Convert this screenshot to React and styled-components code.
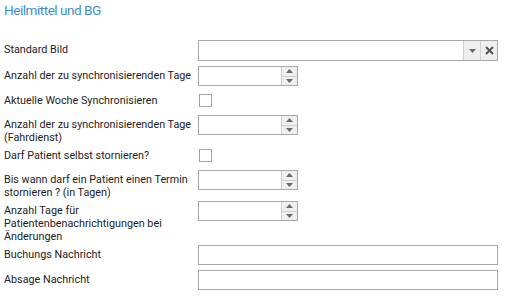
import React from 'react';
import styled, { createGlobalStyle } from 'styled-components';

const GlobalStyle = createGlobalStyle`
  body {
    margin: 0;
    background: #ffffff;
    font-family: Roboto, "Liberation Sans", sans-serif;
  }
`;

const Page = styled.div`
  width: 510px;
  height: 298px;
  padding: 0 4px;
  box-sizing: border-box;
  overflow: hidden;
`;

const Title = styled.h2`
  margin: 0;
  font-size: 13.6px;
  font-weight: 400;
  letter-spacing: -0.5px;
  line-height: 20px;
  color: #3d8ecf;
`;

const Form = styled.div`
  display: flex;
  flex-direction: column;
  gap: 2px;
  margin-top: 20px;
`;

const Row = styled.div`
  display: grid;
  grid-template-columns: 190px 300px;
  column-gap: 4px;
  align-items: start;
`;

const Label = styled.div`
  padding-top: 3px;
  font-size: 10.8px;
  line-height: 13px;
  color: #1c1c24;
  white-space: nowrap;
`;

const Cell = styled.div`
  min-height: ${p => p.$h}px;
  padding-top: ${p => p.$top || 0}px;
  padding-left: ${p => p.$left || 0}px;
  box-sizing: border-box;
`;

const Box = styled.div`
  box-sizing: border-box;
  display: flex;
  width: ${p => p.$w}px;
  height: ${p => p.$h || 20}px;
  border: 1px solid #a8a8a8;
  background: #fff;
`;

const Fill = styled.div`
  flex: 1;
`;

const Btn = styled.div`
  width: 16px;
  display: flex;
  align-items: center;
  justify-content: center;
  background: #efefef;
  border-left: 1px solid #cfcfcf;
`;

const SpinCol = styled.div`
  display: flex;
  flex-direction: column;
  width: 16px;
`;

const SpinBtn = styled.div`
  flex: 1;
  display: flex;
  align-items: center;
  justify-content: center;
  background: #efefef;
  border-left: 1px solid #cfcfcf;
  border-top: ${p => (p.$down ? '1px solid #cfcfcf' : 'none')};
`;

const Check = styled.div`
  width: 13px;
  height: 13px;
  box-sizing: border-box;
  border: 1px solid #a3a3a3;
  background: #fff;
`;

const Arrow = ({ up }) => (
  <svg width="7" height="4" viewBox="0 0 7 4">
    <polygon points={up ? '0,4 7,4 3.5,0' : '0,0 7,0 3.5,4'} fill="#6a6a6a" />
  </svg>
);

const Cross = () => (
  <svg width="9" height="9" viewBox="0 0 9 9">
    <path d="M1 1 L8 8 M8 1 L1 8" stroke="#555" strokeWidth="2" />
  </svg>
);

const Combo = () => (
  <Cell $h={24}>
    <Box $w={300} $h={21}>
      <Fill />
      <Btn><Arrow /></Btn>
      <Btn><Cross /></Btn>
    </Box>
  </Cell>
);

const Spin = () => (
  <Cell $h={23}>
    <Box $w={100}>
      <Fill />
      <SpinCol>
        <SpinBtn><Arrow up /></SpinBtn>
        <SpinBtn $down><Arrow /></SpinBtn>
      </SpinCol>
    </Box>
  </Cell>
);

const Text = () => (
  <Cell $h={23}>
    <Box $w={300} />
  </Cell>
);

const CheckBox = () => (
  <Cell $h={22} $top={3} $left={1}>
    <Check />
  </Cell>
);

const rows = [
  { label: ['Standard Bild'], editor: <Combo /> },
  { label: ['Anzahl der zu synchronisierenden Tage'], editor: <Spin /> },
  { label: ['Aktuelle Woche Synchronisieren'], editor: <CheckBox /> },
  { label: ['Anzahl der zu synchronisierenden Tage', '(Fahrdienst)'], editor: <Spin /> },
  { label: ['Darf Patient selbst stornieren?'], editor: <CheckBox /> },
  { label: ['Bis wann darf ein Patient einen Termin', 'stornieren ? (in Tagen)'], editor: <Spin /> },
  { label: ['Anzahl Tage für', 'Patientenbenachrichtigungen bei', 'Änderungen'], editor: <Spin /> },
  { label: ['Buchungs Nachricht'], editor: <Text /> },
  { label: ['Absage Nachricht'], editor: <Text /> },
];

const App = () => {
  return (
    <Page>
      <GlobalStyle />
      <Title>Heilmittel und BG</Title>
      <Form>
        {rows.map((r, i) => (
          <Row key={i}>
            <Label>
              {r.label.map((l, j) => (
                <React.Fragment key={j}>
                  {j > 0 && <br />}
                  {l}
                </React.Fragment>
              ))}
            </Label>
            {r.editor}
          </Row>
        ))}
      </Form>
    </Page>
  );
};

export default App;
